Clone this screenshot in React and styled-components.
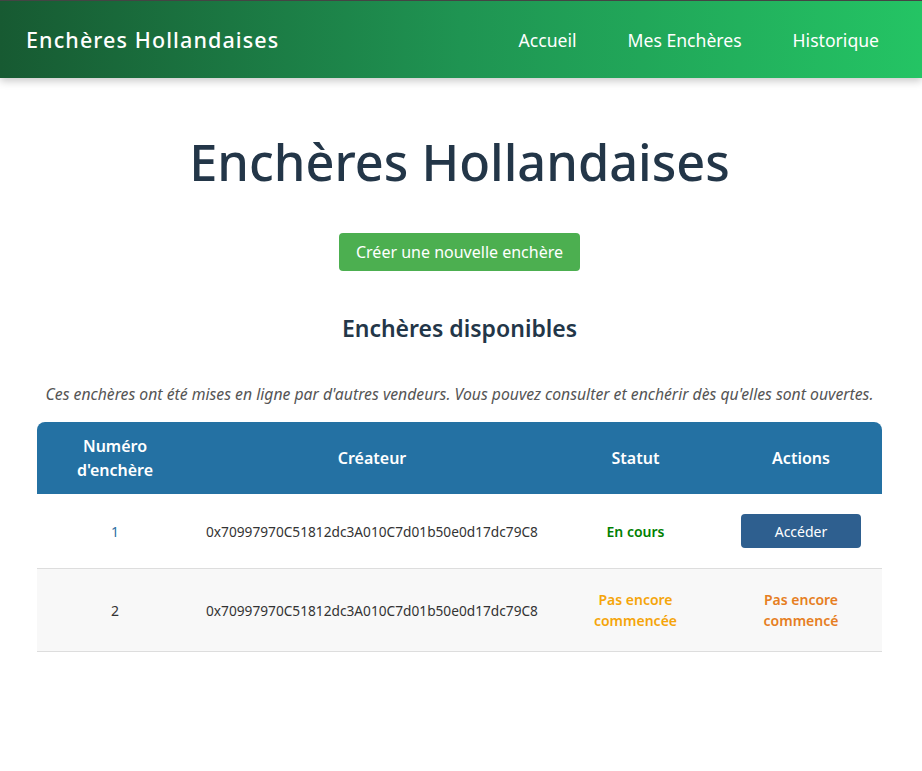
import React from 'react';
import styled, { createGlobalStyle } from 'styled-components';

const GlobalStyle = createGlobalStyle`
  * { box-sizing: border-box; }
  body {
    margin: 0;
    font-family: 'Noto Sans', 'Open Sans', sans-serif;
    color: #333;
    background: #fff;
  }
`;

const Navbar = styled.header`
  display: flex;
  align-items: center;
  justify-content: space-between;
  height: 78px;
  padding: 0 43px 0 26px;
  background: linear-gradient(90deg, #175a32 0%, #1f9452 50%, #24c464 100%);
  border-top: 1px solid #444;
  box-shadow: 0 3px 8px rgba(0, 0, 0, 0.22);
`;

const Brand = styled.div`
  color: #fff;
  font-size: 21.5px;
  font-weight: 500;
  letter-spacing: 1.1px;
`;

const NavLinks = styled.nav`
  display: flex;
  gap: 51px;
`;

const NavLink = styled.a`
  color: #fff;
  font-size: 17.6px;
  text-decoration: none;
  cursor: pointer;
`;

const Main = styled.main`
  padding: 0 40px 0 37px;
  display: flex;
  flex-direction: column;
  align-items: center;
`;

const Title = styled.h1`
  margin: 52px 0 0;
  font-size: 50.5px;
  line-height: 64px;
  font-weight: 500;
  color: #233648;
`;

const CreateButton = styled.button`
  margin-top: 39px;
  width: 241px;
  height: 38px;
  border: none;
  border-radius: 4px;
  background: #4caf50;
  color: #fff;
  font-family: inherit;
  font-size: 16px;
  cursor: pointer;
`;

const Subtitle = styled.h2`
  margin: 42px 0 0;
  font-size: 23px;
  line-height: 30px;
  font-weight: 600;
  color: #233648;
`;

const Intro = styled.p`
  margin: 39px 0 0;
  font-size: 15.75px;
  line-height: 24px;
  font-style: italic;
  color: #555;
  text-align: center;
`;

const Table = styled.table`
  margin-top: 16px;
  width: 100%;
  border-collapse: collapse;
  table-layout: fixed;
`;

const HeadRow = styled.tr`
  background: #2471a3;
`;

const Th = styled.th`
  padding: 12px 15px;
  color: #fff;
  font-size: 16px;
  line-height: 24px;
  font-weight: 600;
  text-align: center;
  width: ${(p) => p.$w}px;
  &:first-child { border-top-left-radius: 8px; }
  &:last-child { border-top-right-radius: 8px; }
`;

const Row = styled.tr`
  background: ${(p) => (p.$alt ? '#f8f8f8' : '#fff')};
  border-bottom: 1px solid #ddd;
`;

const Td = styled.td`
  padding: 20px 15px;
  font-size: 14px;
  line-height: 21px;
  text-align: center;
  color: ${(p) => p.$color || '#333'};
  font-weight: ${(p) => (p.$bold ? 600 : 400)};
`;

const Address = styled(Td)`
  font-size: 13.7px;
  padding: 20px 0;
`;

const ActionButton = styled.button`
  display: block;
  margin: 0 auto;
  width: 120px;
  height: 34px;
  border: none;
  border-radius: 4px;
  background: #2e5f8f;
  color: #fff;
  font-family: inherit;
  font-size: 14px;
  cursor: pointer;
`;

const address = '0x70997970C51812dc3A010C7d01b50e0d17dc79C8';

export default function App() {
  return (
    <>
      <GlobalStyle />
      <Navbar>
        <Brand>Enchères Hollandaises</Brand>
        <NavLinks>
          <NavLink>Accueil</NavLink>
          <NavLink>Mes Enchères</NavLink>
          <NavLink>Historique</NavLink>
        </NavLinks>
      </Navbar>
      <Main>
        <Title>Enchères Hollandaises</Title>
        <CreateButton>Créer une nouvelle enchère</CreateButton>
        <Subtitle>Enchères disponibles</Subtitle>
        <Intro>
          Ces enchères ont été mises en ligne par d'autres vendeurs. Vous pouvez consulter et enchérir dès qu'elles sont ouvertes.
        </Intro>
        <Table>
          <thead>
            <HeadRow>
              <Th $w={156}>Numéro d'enchère</Th>
              <Th $w={358}>Créateur</Th>
              <Th $w={169}>Statut</Th>
              <Th $w={162}>Actions</Th>
            </HeadRow>
          </thead>
          <tbody>
            <Row>
              <Td $color="#2f6fa3">1</Td>
              <Address>{address}</Address>
              <Td $color="#008000" $bold>En cours</Td>
              <Td>
                <ActionButton>Accéder</ActionButton>
              </Td>
            </Row>
            <Row $alt>
              <Td>2</Td>
              <Address>{address}</Address>
              <Td $color="#f5a50a" $bold>Pas encore commencée</Td>
              <Td $color="#e67e22" $bold>Pas encore commencé</Td>
            </Row>
          </tbody>
        </Table>
      </Main>
    </>
  );
}
